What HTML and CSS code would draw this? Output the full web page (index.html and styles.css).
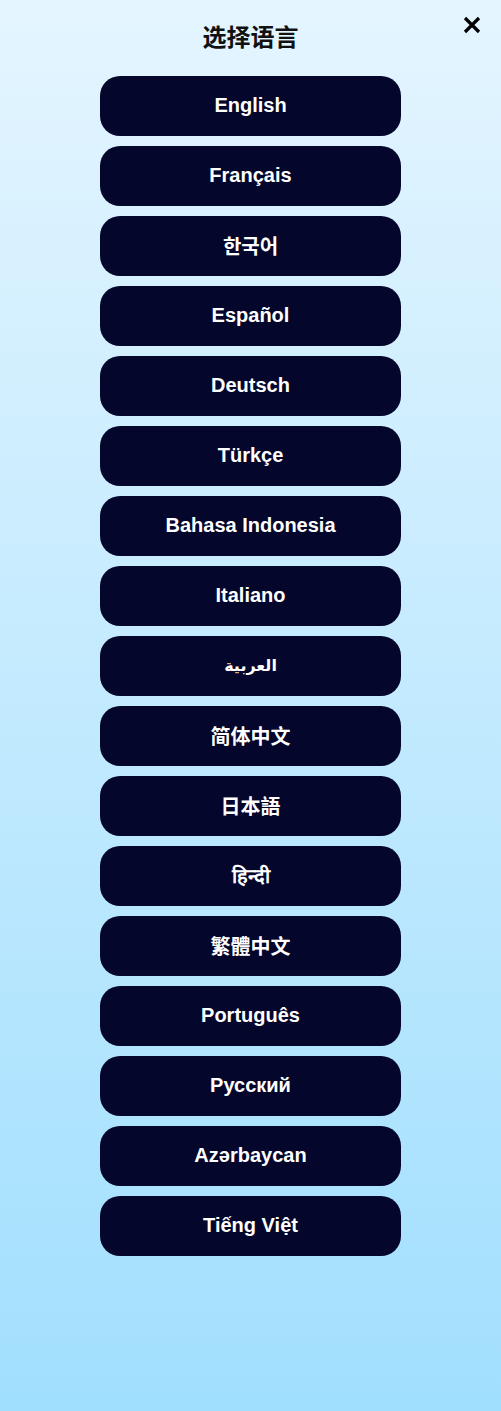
FILE: index.html
```html
<!DOCTYPE html>
<html lang="zh">
<head>
<meta charset="utf-8">
<title>选择语言</title>
<link rel="stylesheet" href="styles.css">
</head>
<body>
<div class="page">
  <header class="header">
    <h2 class="title">选择语言</h2>
    <button class="close" aria-label="close">
      <svg width="18" height="18" viewBox="0 0 18 18"><path d="M2 2L16 16M16 2L2 16" stroke="#000" stroke-width="3.2" stroke-linecap="butt"/></svg>
    </button>
  </header>
  <ul class="list">
    <li><button class="lang">English</button></li>
    <li><button class="lang">Français</button></li>
    <li><button class="lang">한국어</button></li>
    <li><button class="lang">Español</button></li>
    <li><button class="lang">Deutsch</button></li>
    <li><button class="lang">Türkçe</button></li>
    <li><button class="lang">Bahasa Indonesia</button></li>
    <li><button class="lang">Italiano</button></li>
    <li><button class="lang lang-ar">العربية</button></li>
    <li><button class="lang">简体中文</button></li>
    <li><button class="lang">日本語</button></li>
    <li><button class="lang">हिन्दी</button></li>
    <li><button class="lang">繁體中文</button></li>
    <li><button class="lang">Português</button></li>
    <li><button class="lang">Русский</button></li>
    <li><button class="lang">Azərbaycan</button></li>
    <li><button class="lang">Tiếng Việt</button></li>
  </ul>
</div>
</body>
</html>
```
FILE: styles.css
```css
html, body {
  margin: 0;
  padding: 0;
}
body {
  min-height: 1411px;
  background: linear-gradient(180deg, #e4f5ff 0%, #a1dffe 100%);
  font-family: "Liberation Sans", Arial, "Noto Sans CJK SC", sans-serif;
}
.page {
  position: relative;
  display: flex;
  flex-direction: column;
  align-items: center;
}
.header {
  width: 100%;
  padding-top: 20px;
}
.title {
  margin: 0;
  text-align: center;
  font-size: 24px;
  line-height: 36px;
  font-weight: 700;
  color: #111;
  font-family: "Liberation Sans", "Noto Sans CJK SC", sans-serif;
}
.close {
  position: absolute;
  top: 16px;
  right: 20px;
  width: 18px;
  height: 18px;
  padding: 0;
  border: 0;
  background: none;
  display: flex;
}
.list {
  list-style: none;
  margin: 20px 0 0;
  padding: 0;
  display: flex;
  flex-direction: column;
  gap: 10px;
}
.lang {
  display: block;
  width: 301px;
  height: 60px;
  border: 0;
  border-radius: 20px;
  background: #05062b;
  color: #fff;
  font-family: "Liberation Sans", Arial, "Noto Sans CJK SC", "Noto Sans CJK KR", "Noto Sans CJK JP", "DejaVu Sans", sans-serif;
  font-size: 20px;
  font-weight: 700;
  padding: 0 0 2px;
}
.lang-ar {
  font-family: "DejaVu Sans", sans-serif;
  font-size: 16px;
}
```
